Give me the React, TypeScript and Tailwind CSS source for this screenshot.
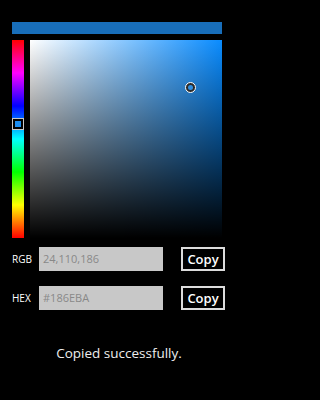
import React from "react";

export default function App() {
  const font = { fontFamily: '"Open Sans", "Noto Sans", sans-serif' };
  return (
    <div className="w-full min-h-screen bg-black">
      <div className="w-[240px] h-[400px] bg-black pl-3 pt-[22px] text-white" style={font}>
        <div className="w-[210px] h-[12px] bg-[#186EBA]" />
        <div className="mt-[6px] w-[210px] flex gap-[6px]">
          <div className="relative w-[12px] h-[198px] bg-[linear-gradient(to_bottom,#f00,#f0f,#00f,#0ff,#0f0,#ff0,#f00)]">
            <div className="absolute left-0 top-[78px] w-[12px] h-[12px] border border-[#c8c8c8] bg-black p-[2px]">
              <div className="w-full h-full bg-[#1a8cf0]" />
            </div>
          </div>
          <div className="relative flex-1 h-[198px] bg-[linear-gradient(to_bottom,transparent,#000),linear-gradient(to_right,#fff,#0a8cff)]">
            <div className="absolute left-[155px] top-[42px] w-[11px] h-[11px] rounded-full border border-white bg-[#2a2a2a] p-[2px]">
              <div className="w-full h-full rounded-full bg-[#2f8ee0]" />
            </div>
          </div>
        </div>
        <div className="mt-[9px] flex items-center h-[24px]">
          <span className="w-[27px] text-[10px] leading-none">RGB</span>
          <div className="w-[124px] h-[24px] bg-[#c8c8c8] text-[#888] text-[11px] leading-[24px] pl-[4px]">24,110,186</div>
          <div className="ml-[18px] w-[44px] h-[24px] border-2 border-[#dcdcdc] flex items-center justify-center text-[13px] font-semibold leading-none">Copy</div>
        </div>
        <div className="mt-[15px] flex items-center h-[24px]">
          <span className="w-[27px] text-[10px] leading-none">HEX</span>
          <div className="w-[124px] h-[24px] bg-[#c8c8c8] text-[#888] text-[11px] leading-[24px] pl-[4px]">#186EBA</div>
          <div className="ml-[18px] w-[44px] h-[24px] border-2 border-[#dcdcdc] flex items-center justify-center text-[13px] font-semibold leading-none">Copy</div>
        </div>
        <div className="mt-[33px] w-[214px] text-center text-[13.5px] leading-[20px] text-[#eee]">Copied successfully.</div>
      </div>
    </div>
  );
}
